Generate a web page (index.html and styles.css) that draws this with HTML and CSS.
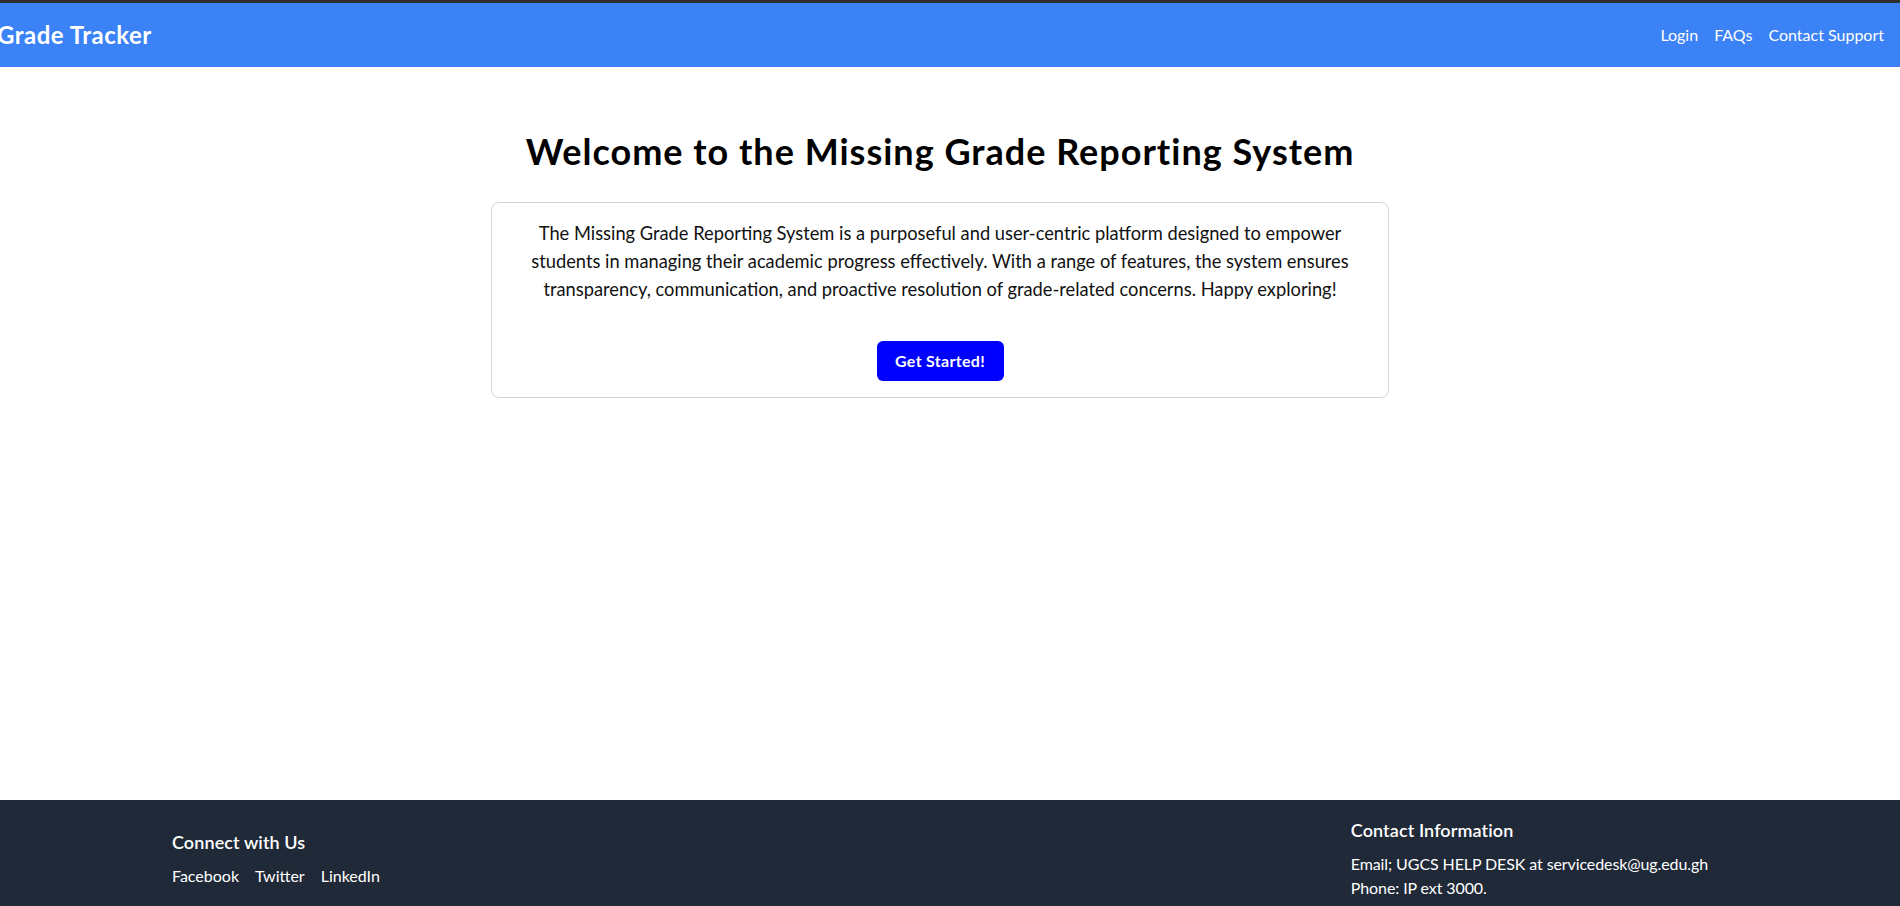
FILE: index.html
```html
<!DOCTYPE html>
<html lang="en">
<head>
<meta charset="utf-8">
<title>Grade Tracker</title>
<link rel="stylesheet" href="styles.css">
</head>
<body>
<div class="topline"></div>
<header class="site-header">
  <a class="brand" href="#">Grade Tracker</a>
  <nav class="nav">
    <a href="#">Login</a>
    <a href="#">FAQs</a>
    <a href="#">Contact Support</a>
  </nav>
</header>
<main class="main">
  <h1 class="title">Welcome to the Missing Grade Reporting System</h1>
  <section class="card">
    <p class="intro">The Missing Grade Reporting System is a purposeful and user-centric platform designed to empower students in managing their academic progress effectively. With a range of features, the system ensures transparency, communication, and proactive resolution of grade-related concerns. Happy exploring!</p>
    <button class="cta" type="button">Get Started!</button>
  </section>
</main>
<footer class="site-footer">
  <div class="footer-inner">
    <div class="footer-col">
      <h3 class="footer-title">Connect with Us</h3>
      <div class="social">
        <a href="#">Facebook</a>
        <a href="#">Twitter</a>
        <a href="#">LinkedIn</a>
      </div>
    </div>
    <div class="footer-col">
      <h3 class="footer-title">Contact Information</h3>
      <p class="footer-line">Email; UGCS HELP DESK at servicedesk@ug.edu.gh</p>
      <p class="footer-line">Phone: IP ext 3000.</p>
    </div>
  </div>
</footer>
</body>
</html>
```
FILE: styles.css
```css
* { box-sizing: border-box; }
html, body { margin: 0; padding: 0; }
body {
  font-family: "Lato", "Noto Sans", "Liberation Sans", sans-serif;
  color: #111;
  background: #fff;
  overflow-x: hidden;
}
a { text-decoration: none; color: inherit; }

.topline { height: 3px; background: #2f2f2f; }

.site-header {
  height: 64px;
  background: #3b82f6;
  display: flex;
  align-items: center;
  justify-content: space-between;
  padding: 0 16px;
}
.brand {
  margin-left: -19px;
  color: #fff;
  font-weight: 700;
  font-size: 24px;
  line-height: 32px;
  letter-spacing: 0.5px;
}
.nav { display: flex; gap: 16px; }
.nav a { color: #fff; font-size: 16px; line-height: 24px; }

.main {
  min-height: 733px;
  padding: 64px 20px 0 0;
  display: flex;
  flex-direction: column;
  align-items: center;
}
.title {
  margin: 0 0 31px;
  font-size: 36px;
  line-height: 40px;
  font-weight: 700;
  letter-spacing: 1px;
  color: #000;
}
.card {
  width: 898px;
  border: 1px solid #d1d5db;
  border-radius: 8px;
  padding: 16px;
  display: flex;
  flex-direction: column;
  align-items: center;
}
.intro {
  max-width: 840px;
  margin: 0 0 38px;
  text-align: center;
  font-size: 18.3px;
  line-height: 28px;
  color: #111;
}
.cta {
  background: #0000ff;
  color: #fff;
  font-family: inherit;
  font-weight: 700;
  font-size: 16px;
  line-height: 24px;
  letter-spacing: 0.3px;
  border: 0;
  border-radius: 6px;
  padding: 8px 18px;
  width: 127px;
}

.site-footer {
  background: #1f2937;
  color: #fff;
  padding: 16px 20px 16px 0;
}
.footer-inner {
  width: 1536px;
  margin: 0 auto;
  display: flex;
  justify-content: space-between;
  align-items: center;
}
.footer-title {
  margin: 0 0 8px;
  font-size: 18px;
  line-height: 28px;
  font-weight: 600;
  letter-spacing: 0.1px;
}
.social { display: flex; gap: 16px; font-size: 16px; line-height: 24px; }
.footer-line { margin: 0; font-size: 16px; line-height: 24px; letter-spacing: -0.1px; }
```
